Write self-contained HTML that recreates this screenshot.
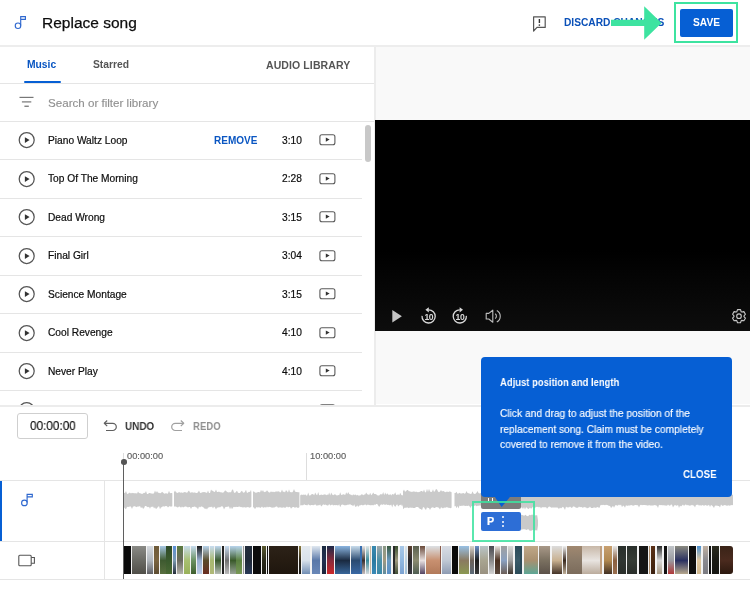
<!DOCTYPE html>
<html><head><meta charset="utf-8">
<style>
*{box-sizing:border-box;margin:0;padding:0}
html,body{width:750px;height:594px;overflow:hidden;background:#fff;font-family:"Liberation Sans",sans-serif;color:#0d0d0d}
.a{position:absolute;white-space:nowrap;will-change:transform}
.hl{position:absolute;height:1px;background:#e5e5e5}
.vl{position:absolute;width:1px;background:#e5e5e5}
</style></head><body>
<!-- header -->
<svg class="a" style="left:12px;top:14px" width="18" height="18" viewBox="0 0 18 18">
  <circle cx="6" cy="11.7" r="2.75" fill="none" stroke="#2f68cf" stroke-width="1.15"/>
  <path d="M8.7 11.4V2.6H13.4V5.4H8.7" fill="none" stroke="#2f68cf" stroke-width="1.15"/>
</svg>
<div class="a" style="left:42px;top:12.5px;font-size:15.5px;line-height:20px;color:#0d0d0d;-webkit-text-stroke:0.25px #0d0d0d">Replace song</div>

<svg class="a" style="left:531px;top:14px" width="16" height="18" viewBox="0 0 16 18">
  <path d="M2.6 2.8H14.2V13.4H6L2.6 17Z" fill="none" stroke="#555" stroke-width="1.2" stroke-linejoin="round"/>
  <rect x="7.7" y="5" width="1.4" height="4" fill="#333"/>
  <rect x="7.7" y="10.4" width="1.4" height="1.4" fill="#333"/>
</svg>
<div class="a" style="left:564px;top:16px;font-size:10.2px;font-weight:700;line-height:14px;color:#0a50b8">DISCARD CHANGES</div>

<div class="a" style="left:680px;top:9px;width:53px;height:28px;background:#065fd4;border-radius:2px"></div>
<div class="a" style="left:680px;top:16px;width:53px;text-align:center;font-size:10.2px;font-weight:700;line-height:14px;color:#fff">SAVE</div>
<div class="a" style="left:674px;top:2px;width:64px;height:41px;border:2px solid #3de3a0"></div>
<svg class="a" style="left:600px;top:0" width="70" height="45" viewBox="0 0 70 45">
  <path d="M11 19.8H44.2V6.3L61.5 23L44.2 39.7V26.1H11Z" fill="#3de3a0"/>
</svg>

<div class="hl" style="left:0;top:45px;width:750px;height:2px;background:#ededed"></div>

<!-- right panel background -->
<div class="a" style="left:376px;top:47px;width:374px;height:357px;background:#f9f9f9"></div>
<div class="vl" style="left:374px;top:47px;height:358px;width:2px;background:#ececec"></div>

<!-- tabs -->
<div class="a" style="left:27px;top:58px;font-size:10.3px;font-weight:700;line-height:13px;color:#0a56c2">Music</div>
<div class="a" style="left:24px;top:81px;width:37px;height:2px;background:#065fd4;border-radius:1px"></div>
<div class="a" style="left:93px;top:58px;font-size:10.3px;font-weight:700;line-height:13px;color:#555">Starred</div>
<div class="a" style="left:265.5px;top:59px;font-size:10.5px;font-weight:700;line-height:13px;color:#555;letter-spacing:0.1px">AUDIO LIBRARY</div>
<div class="hl" style="left:0;top:83px;width:374px"></div>

<!-- search -->
<svg class="a" style="left:18px;top:94px" width="18" height="16" viewBox="0 0 18 16">
  <rect x="1.5" y="2.8" width="14" height="1.2" fill="#777"/>
  <rect x="3.9" y="7.3" width="9.4" height="1.2" fill="#777"/>
  <rect x="6.4" y="11.6" width="4.4" height="1.3" fill="#777"/>
</svg>
<div class="a" style="left:48px;top:95px;font-size:11.6px;line-height:15px;color:#909090;-webkit-text-stroke:0.15px #909090">Search or filter library</div>
<div class="hl" style="left:0;top:121px;width:374px"></div>

<!-- list -->
<div id="list" class="a" style="left:0;top:0;width:374px;height:405px;overflow:hidden">
<svg class="a" style="left:17px;top:130.3px" width="20" height="20" viewBox="0 0 20 20"><circle cx="9.7" cy="10" r="7.5" fill="none" stroke="#555" stroke-width="1.25"/><path d="M7.9 7.2V12.9L12.6 10.05Z" fill="#333"/></svg>
<div class="a" style="left:48px;top:133.8px;font-size:10.2px;line-height:14px;color:#0d0d0d;-webkit-text-stroke:0.2px #0d0d0d">Piano Waltz Loop</div>
<div class="a" style="left:282px;top:133.8px;font-size:10.2px;line-height:14px;color:#0d0d0d;-webkit-text-stroke:0.2px #0d0d0d">3:10</div>
<div class="a" style="left:213.7px;top:133.8px;font-size:10px;font-weight:700;line-height:14px;color:#0a56c2">REMOVE</div>
<svg class="a" style="left:317px;top:132.3px" width="20" height="16" viewBox="0 0 20 16"><rect x="2.9" y="2.7" width="15" height="10" rx="2" fill="none" stroke="#5a5a5a" stroke-width="1.1"/><path d="M8.8 5.4V9.7L12.6 7.55Z" fill="#333"/></svg>
<div class="hl" style="left:0;top:159.4px;width:362px"></div>
<svg class="a" style="left:17px;top:168.8px" width="20" height="20" viewBox="0 0 20 20"><circle cx="9.7" cy="10" r="7.5" fill="none" stroke="#555" stroke-width="1.25"/><path d="M7.9 7.2V12.9L12.6 10.05Z" fill="#333"/></svg>
<div class="a" style="left:48px;top:172.2px;font-size:10.2px;line-height:14px;color:#0d0d0d;-webkit-text-stroke:0.2px #0d0d0d">Top Of The Morning</div>
<div class="a" style="left:282px;top:172.2px;font-size:10.2px;line-height:14px;color:#0d0d0d;-webkit-text-stroke:0.2px #0d0d0d">2:28</div>
<svg class="a" style="left:317px;top:170.8px" width="20" height="16" viewBox="0 0 20 16"><rect x="2.9" y="2.7" width="15" height="10" rx="2" fill="none" stroke="#5a5a5a" stroke-width="1.1"/><path d="M8.8 5.4V9.7L12.6 7.55Z" fill="#333"/></svg>
<div class="hl" style="left:0;top:197.9px;width:362px"></div>
<svg class="a" style="left:17px;top:207.2px" width="20" height="20" viewBox="0 0 20 20"><circle cx="9.7" cy="10" r="7.5" fill="none" stroke="#555" stroke-width="1.25"/><path d="M7.9 7.2V12.9L12.6 10.05Z" fill="#333"/></svg>
<div class="a" style="left:48px;top:210.7px;font-size:10.2px;line-height:14px;color:#0d0d0d;-webkit-text-stroke:0.2px #0d0d0d">Dead Wrong</div>
<div class="a" style="left:282px;top:210.7px;font-size:10.2px;line-height:14px;color:#0d0d0d;-webkit-text-stroke:0.2px #0d0d0d">3:15</div>
<svg class="a" style="left:317px;top:209.2px" width="20" height="16" viewBox="0 0 20 16"><rect x="2.9" y="2.7" width="15" height="10" rx="2" fill="none" stroke="#5a5a5a" stroke-width="1.1"/><path d="M8.8 5.4V9.7L12.6 7.55Z" fill="#333"/></svg>
<div class="hl" style="left:0;top:236.4px;width:362px"></div>
<svg class="a" style="left:17px;top:245.7px" width="20" height="20" viewBox="0 0 20 20"><circle cx="9.7" cy="10" r="7.5" fill="none" stroke="#555" stroke-width="1.25"/><path d="M7.9 7.2V12.9L12.6 10.05Z" fill="#333"/></svg>
<div class="a" style="left:48px;top:249.2px;font-size:10.2px;line-height:14px;color:#0d0d0d;-webkit-text-stroke:0.2px #0d0d0d">Final Girl</div>
<div class="a" style="left:282px;top:249.2px;font-size:10.2px;line-height:14px;color:#0d0d0d;-webkit-text-stroke:0.2px #0d0d0d">3:04</div>
<svg class="a" style="left:317px;top:247.7px" width="20" height="16" viewBox="0 0 20 16"><rect x="2.9" y="2.7" width="15" height="10" rx="2" fill="none" stroke="#5a5a5a" stroke-width="1.1"/><path d="M8.8 5.4V9.7L12.6 7.55Z" fill="#333"/></svg>
<div class="hl" style="left:0;top:274.8px;width:362px"></div>
<svg class="a" style="left:17px;top:284.1px" width="20" height="20" viewBox="0 0 20 20"><circle cx="9.7" cy="10" r="7.5" fill="none" stroke="#555" stroke-width="1.25"/><path d="M7.9 7.2V12.9L12.6 10.05Z" fill="#333"/></svg>
<div class="a" style="left:48px;top:287.6px;font-size:10.2px;line-height:14px;color:#0d0d0d;-webkit-text-stroke:0.2px #0d0d0d">Science Montage</div>
<div class="a" style="left:282px;top:287.6px;font-size:10.2px;line-height:14px;color:#0d0d0d;-webkit-text-stroke:0.2px #0d0d0d">3:15</div>
<svg class="a" style="left:317px;top:286.1px" width="20" height="16" viewBox="0 0 20 16"><rect x="2.9" y="2.7" width="15" height="10" rx="2" fill="none" stroke="#5a5a5a" stroke-width="1.1"/><path d="M8.8 5.4V9.7L12.6 7.55Z" fill="#333"/></svg>
<div class="hl" style="left:0;top:313.2px;width:362px"></div>
<svg class="a" style="left:17px;top:322.6px" width="20" height="20" viewBox="0 0 20 20"><circle cx="9.7" cy="10" r="7.5" fill="none" stroke="#555" stroke-width="1.25"/><path d="M7.9 7.2V12.9L12.6 10.05Z" fill="#333"/></svg>
<div class="a" style="left:48px;top:326.1px;font-size:10.2px;line-height:14px;color:#0d0d0d;-webkit-text-stroke:0.2px #0d0d0d">Cool Revenge</div>
<div class="a" style="left:282px;top:326.1px;font-size:10.2px;line-height:14px;color:#0d0d0d;-webkit-text-stroke:0.2px #0d0d0d">4:10</div>
<svg class="a" style="left:317px;top:324.6px" width="20" height="16" viewBox="0 0 20 16"><rect x="2.9" y="2.7" width="15" height="10" rx="2" fill="none" stroke="#5a5a5a" stroke-width="1.1"/><path d="M8.8 5.4V9.7L12.6 7.55Z" fill="#333"/></svg>
<div class="hl" style="left:0;top:351.7px;width:362px"></div>
<svg class="a" style="left:17px;top:361.0px" width="20" height="20" viewBox="0 0 20 20"><circle cx="9.7" cy="10" r="7.5" fill="none" stroke="#555" stroke-width="1.25"/><path d="M7.9 7.2V12.9L12.6 10.05Z" fill="#333"/></svg>
<div class="a" style="left:48px;top:364.5px;font-size:10.2px;line-height:14px;color:#0d0d0d;-webkit-text-stroke:0.2px #0d0d0d">Never Play</div>
<div class="a" style="left:282px;top:364.5px;font-size:10.2px;line-height:14px;color:#0d0d0d;-webkit-text-stroke:0.2px #0d0d0d">4:10</div>
<svg class="a" style="left:317px;top:363.0px" width="20" height="16" viewBox="0 0 20 16"><rect x="2.9" y="2.7" width="15" height="10" rx="2" fill="none" stroke="#5a5a5a" stroke-width="1.1"/><path d="M8.8 5.4V9.7L12.6 7.55Z" fill="#333"/></svg>
<div class="hl" style="left:0;top:390.2px;width:362px"></div>
<svg class="a" style="left:17px;top:399.5px" width="20" height="20" viewBox="0 0 20 20"><circle cx="9.7" cy="10" r="7.5" fill="none" stroke="#555" stroke-width="1.25"/><path d="M7.9 7.2V12.9L12.6 10.05Z" fill="#333"/></svg>
<svg class="a" style="left:317px;top:401.5px" width="20" height="16" viewBox="0 0 20 16"><rect x="2.9" y="2.7" width="15" height="10" rx="2" fill="none" stroke="#5a5a5a" stroke-width="1.1"/><path d="M8.8 5.4V9.7L12.6 7.55Z" fill="#333"/></svg>
</div>

<div class="a" style="left:365px;top:125px;width:6px;height:37px;background:#c8c8c8;border-radius:3px"></div>

<!-- video -->
<div class="a" style="left:375px;top:120px;width:375px;height:211px;background:#000"></div>


<div class="a" style="left:375px;top:250px;width:375px;height:81px;background:linear-gradient(#000,#0d0d0d)"></div>
<!-- video controls -->
<svg class="a" style="left:385px;top:300px" width="125" height="30" viewBox="0 0 125 30">
  <path d="M7.3 10V22.4L16.9 16.2Z" fill="#c4c4c4"/>
  <g fill="none" stroke="#d8d8d8" stroke-width="1.3">
    <path d="M43.60 9.80A6.6 6.6 0 1 1 37.03 15.82"/>
    <path d="M74.80 9.80A6.6 6.6 0 1 0 81.37 15.82"/>
  </g>
  <path d="M40.4 9.8L43.8 7.2V12.4Z" fill="#d8d8d8"/>
  <path d="M78 9.8L74.6 7.2V12.4Z" fill="#d8d8d8"/>
  <text x="43.8" y="19.7" font-family="Liberation Sans" font-weight="700" font-size="8.6" fill="#d8d8d8" text-anchor="middle" letter-spacing="-0.4">10</text>
  <text x="75" y="19.7" font-family="Liberation Sans" font-weight="700" font-size="8.6" fill="#d8d8d8" text-anchor="middle" letter-spacing="-0.4">10</text>
  <g fill="none" stroke="#bdbdbd" stroke-width="1.1" stroke-linejoin="round">
    <path d="M101.2 13.4H103.8L107.8 10.2V22.2L103.8 19H101.2Z"/>
    <path d="M110.2 13.8A3 3 0 0 1 110.2 18.6"/>
    <path d="M111.8 10.4A6.6 6.6 0 0 1 111.8 22"/>
  </g>
</svg>
<svg class="a" style="left:730px;top:307px" width="18" height="18" viewBox="0 0 18 18">
  <path d="M6.81 4.71 L7.49 2.67 L10.51 2.67 L11.19 4.71 L11.80 5.05 L13.90 4.63 L15.41 7.24 L13.99 8.85 L13.99 9.55 L15.41 11.16 L13.90 13.77 L11.80 13.35 L11.19 13.69 L10.51 15.73 L7.49 15.73 L6.81 13.69 L6.20 13.35 L4.10 13.77 L2.59 11.16 L4.01 9.55 L4.01 8.85 L2.59 7.24 L4.10 4.63 L6.20 5.05Z" fill="none" stroke="#c8c8c8" stroke-width="1.1" stroke-linejoin="round"/>
  <circle cx="9" cy="9.2" r="2.3" fill="none" stroke="#c8c8c8" stroke-width="1.1"/>
</svg>

<div class="hl" style="left:0;top:405px;width:750px;height:2px;background:#ececec"></div>

<!-- timeline toolbar -->
<div class="a" style="left:17px;top:413px;width:71px;height:26px;border:1px solid #cfcfcf;border-radius:3px"></div>
<div class="a" style="left:29.5px;top:418.4px;font-size:13px;line-height:15px;color:#0d0d0d;transform:scaleX(0.905);transform-origin:0 0;-webkit-text-stroke:0.15px #0d0d0d">00:00:00</div>
<svg class="a" style="left:100px;top:416px" width="90" height="20" viewBox="0 0 90 20">
  <g fill="none" stroke="#606060" stroke-width="1.2" stroke-linejoin="round">
    <path d="M4.6 7.3H12.7A3.6 3.6 0 0 1 12.7 14.5H6"/>
    <path d="M7.2 4.5L4.3 7.3L7.2 10.1"/>
  </g>
  <g fill="none" stroke="#a0a0a0" stroke-width="1.2" stroke-linejoin="round">
    <path d="M83.4 7.3H75.3A3.6 3.6 0 0 0 75.3 14.5H82"/>
    <path d="M80.8 4.5L83.7 7.3L80.8 10.1"/>
  </g>
</svg>
<div class="a" style="left:125px;top:419px;font-size:11px;font-weight:700;line-height:14px;color:#333;transform:scaleX(0.9);transform-origin:0 0">UNDO</div>
<div class="a" style="left:193px;top:419px;font-size:11px;font-weight:700;line-height:14px;color:#909090;transform:scaleX(0.87);transform-origin:0 0">REDO</div>

<!-- ruler -->
<div class="a" style="left:127px;top:451px;font-size:9.3px;line-height:11px;color:#606060;-webkit-text-stroke:0.15px #606060">00:00:00</div>
<div class="a" style="left:310px;top:451px;font-size:9.3px;line-height:11px;color:#606060;-webkit-text-stroke:0.15px #606060">10:00:00</div>
<div class="vl" style="left:306px;top:453px;height:28px;background:#ddd"></div>

<!-- tracks -->
<div class="hl" style="left:0;top:480px;width:750px"></div>
<div class="hl" style="left:0;top:541px;width:750px"></div>
<div class="hl" style="left:0;top:579px;width:750px"></div>
<div class="vl" style="left:104px;top:481px;height:98px"></div>
<div class="a" style="left:0;top:481px;width:2px;height:60px;background:#065fd4"></div>
<svg class="a" style="left:16px;top:490px" width="20" height="20" viewBox="0 0 20 20">
  <circle cx="8.4" cy="12.9" r="2.8" fill="none" stroke="#2f68cf" stroke-width="1.15"/>
  <path d="M11.1 12.4V4.3H16.3V6.9H11.1" fill="none" stroke="#2f68cf" stroke-width="1.15"/>
</svg>
<svg class="a" style="left:15px;top:551px" width="24" height="18" viewBox="0 0 24 18">
  <rect x="3.8" y="4.2" width="12.4" height="10.6" rx="1" fill="none" stroke="#555" stroke-width="1.1"/>
  <path d="M16.2 6.5H19.4V12.3H16.2" fill="none" stroke="#555" stroke-width="1.1"/>
</svg>
<svg class="a" style="left:0;top:0" width="750" height="594" viewBox="0 0 750 594"><path fill="#cacaca" d="M124.0 492.8 L125.0 493.1 L126.0 491.1 L127.0 493.8 L128.0 494.0 L129.0 492.7 L130.0 492.8 L131.0 493.5 L132.0 492.7 L133.0 493.2 L134.0 493.0 L135.0 493.5 L136.0 493.0 L137.0 493.7 L138.0 491.4 L139.0 493.1 L140.0 493.3 L141.0 493.6 L142.0 494.1 L143.0 493.6 L144.0 492.8 L145.0 493.0 L146.0 491.1 L147.0 493.9 L148.0 493.9 L149.0 492.9 L150.0 493.0 L151.0 493.4 L152.0 493.5 L153.0 493.8 L154.0 493.2 L155.0 490.5 L156.0 492.7 L157.0 490.9 L158.0 492.8 L159.0 492.8 L160.0 493.3 L161.0 493.0 L162.0 491.8 L163.0 492.6 L164.0 493.6 L165.0 493.8 L166.0 492.9 L167.0 493.8 L168.0 493.4 L169.0 490.8 L170.0 493.3 L171.0 493.1 L172.0 492.9 L172.3 493.6 L172.3 506.4 L172.0 506.0 L171.0 507.1 L170.0 505.9 L169.0 506.4 L168.0 507.4 L167.0 506.3 L166.0 505.9 L165.0 506.2 L164.0 506.8 L163.0 505.9 L162.0 507.2 L161.0 507.2 L160.0 509.2 L159.0 505.9 L158.0 506.9 L157.0 508.1 L156.0 509.2 L155.0 507.2 L154.0 508.4 L153.0 506.2 L152.0 507.3 L151.0 506.4 L150.0 508.8 L149.0 506.7 L148.0 507.2 L147.0 506.8 L146.0 506.1 L145.0 506.1 L144.0 508.2 L143.0 508.7 L142.0 507.0 L141.0 508.3 L140.0 506.0 L139.0 506.5 L138.0 506.5 L137.0 506.7 L136.0 507.2 L135.0 506.1 L134.0 506.4 L133.0 506.5 L132.0 509.1 L131.0 506.8 L130.0 506.2 L129.0 507.0 L128.0 506.8 L127.0 507.1 L126.0 509.3 L125.0 508.6 L124.0 507.3Z M174.0 492.3 L175.0 490.4 L176.0 492.3 L177.0 492.8 L178.0 493.0 L179.0 491.8 L180.0 492.8 L181.0 492.4 L182.0 492.6 L183.0 492.9 L184.0 492.0 L185.0 492.2 L186.0 492.3 L187.0 493.0 L188.0 491.6 L189.0 490.6 L190.0 492.4 L191.0 492.8 L192.0 492.0 L193.0 492.7 L194.0 492.4 L195.0 492.4 L196.0 492.9 L197.0 493.0 L198.0 492.3 L199.0 490.4 L200.0 492.7 L201.0 493.1 L202.0 492.3 L203.0 492.2 L204.0 492.1 L205.0 492.3 L206.0 492.4 L207.0 493.1 L208.0 490.6 L209.0 493.0 L210.0 493.0 L211.0 489.5 L212.0 490.8 L213.0 490.7 L214.0 492.1 L215.0 491.8 L216.0 489.6 L217.0 492.1 L218.0 491.9 L219.0 491.6 L220.0 492.3 L221.0 492.2 L222.0 492.4 L223.0 492.8 L224.0 492.1 L225.0 490.5 L226.0 490.7 L227.0 492.0 L228.0 492.3 L229.0 492.4 L230.0 492.1 L231.0 492.4 L232.0 489.8 L233.0 489.4 L234.0 492.4 L235.0 492.9 L236.0 491.8 L237.0 490.7 L238.0 492.8 L239.0 492.9 L240.0 492.9 L241.0 491.6 L242.0 490.7 L243.0 492.6 L244.0 492.7 L245.0 491.7 L246.0 489.8 L247.0 493.1 L248.0 492.6 L249.0 491.7 L250.0 492.1 L251.0 489.8 L251.4 492.6 L251.4 506.8 L251.0 506.8 L250.0 507.8 L249.0 507.4 L248.0 506.9 L247.0 507.2 L246.0 507.5 L245.0 507.4 L244.0 507.0 L243.0 507.8 L242.0 506.9 L241.0 507.3 L240.0 506.8 L239.0 506.6 L238.0 507.0 L237.0 506.9 L236.0 506.8 L235.0 507.3 L234.0 506.8 L233.0 507.5 L232.0 509.2 L231.0 507.0 L230.0 509.2 L229.0 506.4 L228.0 506.4 L227.0 507.1 L226.0 506.8 L225.0 507.6 L224.0 509.6 L223.0 506.8 L222.0 506.3 L221.0 506.5 L220.0 507.6 L219.0 507.0 L218.0 507.8 L217.0 507.4 L216.0 509.5 L215.0 507.4 L214.0 506.4 L213.0 508.5 L212.0 506.6 L211.0 507.2 L210.0 506.7 L209.0 507.4 L208.0 507.6 L207.0 509.4 L206.0 508.3 L205.0 509.3 L204.0 507.8 L203.0 507.3 L202.0 506.6 L201.0 506.4 L200.0 507.6 L199.0 506.5 L198.0 509.4 L197.0 507.6 L196.0 507.4 L195.0 506.4 L194.0 506.8 L193.0 507.1 L192.0 507.0 L191.0 509.0 L190.0 507.0 L189.0 507.1 L188.0 507.5 L187.0 507.0 L186.0 506.4 L185.0 506.4 L184.0 506.9 L183.0 507.5 L182.0 506.4 L181.0 507.8 L180.0 506.8 L179.0 506.6 L178.0 507.5 L177.0 507.2 L176.0 506.6 L175.0 506.6 L174.0 506.6Z M253.0 491.6 L254.0 491.4 L255.0 492.6 L256.0 492.7 L257.0 492.6 L258.0 492.0 L259.0 492.0 L260.0 492.5 L261.0 489.7 L262.0 491.7 L263.0 490.1 L264.0 492.3 L265.0 491.8 L266.0 491.8 L267.0 490.3 L268.0 491.6 L269.0 492.6 L270.0 492.6 L271.0 491.3 L272.0 492.2 L273.0 491.4 L274.0 492.3 L275.0 491.7 L276.0 491.4 L277.0 491.5 L278.0 491.4 L279.0 491.3 L280.0 492.5 L281.0 492.0 L282.0 489.4 L283.0 492.1 L284.0 491.6 L285.0 492.5 L286.0 490.1 L287.0 491.2 L288.0 492.5 L289.0 489.2 L290.0 492.3 L291.0 492.0 L292.0 492.6 L293.0 491.6 L294.0 489.1 L295.0 491.5 L296.0 491.9 L297.0 491.9 L298.0 492.3 L299.0 492.2 L299.4 492.2 L299.4 506.9 L299.0 507.5 L298.0 507.9 L297.0 507.5 L296.0 506.9 L295.0 507.9 L294.0 507.0 L293.0 506.9 L292.0 507.4 L291.0 508.7 L290.0 506.8 L289.0 506.9 L288.0 507.5 L287.0 506.5 L286.0 507.2 L285.0 507.9 L284.0 507.2 L283.0 507.6 L282.0 507.7 L281.0 507.4 L280.0 507.3 L279.0 507.5 L278.0 507.8 L277.0 506.4 L276.0 506.5 L275.0 507.3 L274.0 507.5 L273.0 507.4 L272.0 507.8 L271.0 507.2 L270.0 507.1 L269.0 506.7 L268.0 507.6 L267.0 506.5 L266.0 507.8 L265.0 507.0 L264.0 507.5 L263.0 507.7 L262.0 506.6 L261.0 507.4 L260.0 507.9 L259.0 506.8 L258.0 507.7 L257.0 507.0 L256.0 507.5 L255.0 509.2 L254.0 507.6 L253.0 507.2Z M300.2 495.4 L301.2 494.6 L302.2 495.1 L303.2 494.5 L304.2 495.1 L305.2 494.3 L306.2 495.4 L307.2 495.5 L308.2 492.4 L309.2 495.5 L310.2 495.4 L311.2 494.6 L312.2 494.0 L313.2 494.2 L314.2 495.2 L315.2 492.5 L316.2 494.5 L317.2 495.2 L318.2 491.9 L319.2 495.3 L320.2 494.9 L321.2 494.4 L322.2 495.0 L323.2 494.7 L324.2 494.4 L325.2 494.3 L326.2 495.2 L327.2 494.5 L328.2 495.1 L329.2 492.6 L330.2 495.5 L331.2 492.5 L332.2 494.6 L333.2 495.3 L334.2 494.4 L335.2 494.3 L336.2 495.3 L337.2 495.5 L338.2 495.0 L339.2 495.2 L340.2 492.2 L341.2 494.9 L342.2 494.7 L343.2 494.2 L344.2 494.6 L345.2 494.9 L346.2 492.3 L347.2 494.3 L348.2 492.0 L349.2 494.1 L350.2 494.4 L351.2 494.8 L352.2 495.5 L353.2 494.3 L354.2 495.2 L355.2 494.2 L356.2 495.4 L357.2 494.8 L358.2 495.4 L359.2 495.5 L360.2 495.5 L361.2 494.6 L362.2 494.2 L363.2 495.3 L364.2 494.6 L365.2 494.4 L366.2 492.6 L367.2 494.2 L368.2 494.5 L369.2 495.0 L370.2 492.7 L371.2 495.2 L372.2 494.2 L373.2 492.5 L374.2 494.1 L375.2 494.1 L376.2 494.2 L377.2 495.2 L378.2 495.4 L379.2 495.4 L380.2 494.2 L381.2 494.2 L382.2 494.4 L383.2 492.1 L384.2 495.3 L385.2 492.6 L386.2 494.8 L387.2 493.3 L388.2 494.4 L389.2 495.1 L390.2 494.1 L391.2 495.5 L392.2 494.0 L393.2 494.6 L394.2 494.3 L395.2 492.3 L396.2 494.9 L397.2 494.7 L398.2 494.2 L399.2 495.2 L400.2 492.8 L401.2 494.7 L402.2 495.4 L403.0 495.0 L403.0 504.6 L402.2 506.8 L401.2 504.5 L400.2 505.1 L399.2 505.2 L398.2 506.6 L397.2 504.2 L396.2 505.3 L395.2 507.1 L394.2 505.6 L393.2 504.3 L392.2 507.4 L391.2 504.6 L390.2 505.2 L389.2 505.3 L388.2 504.7 L387.2 505.0 L386.2 504.3 L385.2 505.1 L384.2 504.4 L383.2 504.2 L382.2 505.1 L381.2 504.2 L380.2 505.2 L379.2 507.1 L378.2 505.4 L377.2 504.1 L376.2 504.1 L375.2 505.0 L374.2 504.4 L373.2 505.5 L372.2 505.0 L371.2 505.3 L370.2 505.2 L369.2 504.9 L368.2 504.7 L367.2 504.8 L366.2 505.5 L365.2 504.3 L364.2 505.0 L363.2 505.3 L362.2 505.3 L361.2 504.7 L360.2 505.5 L359.2 505.4 L358.2 506.9 L357.2 505.2 L356.2 506.7 L355.2 506.8 L354.2 504.3 L353.2 506.2 L352.2 505.3 L351.2 505.0 L350.2 504.2 L349.2 504.6 L348.2 504.8 L347.2 504.8 L346.2 505.3 L345.2 505.3 L344.2 505.3 L343.2 504.7 L342.2 504.4 L341.2 505.0 L340.2 507.3 L339.2 504.2 L338.2 505.4 L337.2 505.3 L336.2 505.1 L335.2 505.2 L334.2 505.0 L333.2 505.4 L332.2 504.6 L331.2 504.9 L330.2 505.5 L329.2 504.1 L328.2 505.5 L327.2 505.5 L326.2 505.1 L325.2 504.5 L324.2 504.9 L323.2 504.2 L322.2 505.6 L321.2 506.5 L320.2 504.5 L319.2 505.2 L318.2 505.2 L317.2 505.5 L316.2 505.6 L315.2 504.2 L314.2 505.0 L313.2 505.3 L312.2 505.1 L311.2 505.1 L310.2 505.6 L309.2 505.1 L308.2 504.3 L307.2 505.5 L306.2 505.0 L305.2 505.0 L304.2 504.2 L303.2 505.3 L302.2 505.3 L301.2 505.3 L300.2 505.5Z M403.0 491.3 L404.0 489.5 L405.0 491.8 L406.0 491.2 L407.0 490.0 L408.0 490.0 L409.0 491.6 L410.0 491.0 L411.0 492.2 L412.0 491.6 L413.0 491.9 L414.0 490.9 L415.0 492.3 L416.0 491.4 L417.0 491.9 L418.0 492.2 L419.0 492.0 L420.0 491.8 L421.0 490.9 L422.0 491.1 L423.0 491.9 L424.0 489.6 L425.0 492.2 L426.0 492.3 L427.0 488.8 L428.0 492.1 L429.0 488.8 L430.0 491.5 L431.0 492.0 L432.0 491.7 L433.0 489.3 L434.0 492.0 L435.0 491.0 L436.0 489.0 L437.0 489.4 L438.0 491.6 L439.0 492.3 L440.0 491.6 L441.0 489.9 L442.0 491.4 L443.0 491.0 L444.0 491.3 L445.0 492.2 L446.0 492.0 L447.0 491.4 L448.0 492.0 L449.0 491.8 L450.0 491.3 L451.0 492.2 L451.6 491.9 L451.6 507.4 L451.0 508.2 L450.0 507.9 L449.0 507.7 L448.0 507.7 L447.0 507.1 L446.0 507.4 L445.0 507.7 L444.0 507.6 L443.0 508.4 L442.0 507.8 L441.0 507.2 L440.0 509.4 L439.0 508.1 L438.0 507.2 L437.0 507.2 L436.0 506.9 L435.0 508.1 L434.0 508.1 L433.0 507.2 L432.0 507.5 L431.0 507.9 L430.0 510.0 L429.0 508.1 L428.0 508.0 L427.0 507.2 L426.0 510.1 L425.0 509.1 L424.0 507.2 L423.0 507.3 L422.0 510.3 L421.0 509.0 L420.0 509.0 L419.0 507.9 L418.0 507.1 L417.0 506.9 L416.0 507.0 L415.0 507.9 L414.0 508.0 L413.0 508.1 L412.0 507.6 L411.0 508.0 L410.0 507.3 L409.0 508.2 L408.0 507.7 L407.0 507.3 L406.0 507.9 L405.0 507.4 L404.0 508.2 L403.0 509.2Z M454.5 493.1 L455.5 492.9 L456.5 491.8 L457.5 493.8 L458.5 493.6 L459.5 492.7 L460.5 493.4 L461.5 493.5 L462.5 493.2 L463.5 492.9 L464.5 493.7 L465.5 493.3 L466.5 491.0 L467.5 493.0 L468.5 493.2 L469.5 493.6 L470.5 494.1 L471.5 493.8 L472.5 491.3 L473.5 493.6 L474.5 494.0 L475.5 493.7 L476.5 492.7 L477.5 491.0 L478.5 493.0 L479.5 493.4 L480.5 492.9 L481.5 493.6 L482.5 494.0 L483.5 493.8 L484.5 492.8 L485.5 493.0 L486.5 492.9 L487.5 493.0 L488.5 493.6 L489.5 493.9 L490.5 493.8 L491.5 492.6 L492.5 493.0 L493.5 493.8 L494.5 493.8 L495.5 493.8 L496.5 493.9 L497.5 493.7 L498.5 493.0 L499.5 492.7 L500.5 493.3 L501.5 491.7 L502.5 493.9 L503.5 492.7 L504.5 491.3 L505.5 494.1 L506.5 492.7 L507.5 493.9 L508.5 493.8 L509.5 493.4 L510.5 493.2 L511.5 494.1 L512.5 493.1 L513.5 493.8 L514.5 493.4 L515.5 490.7 L516.5 493.8 L517.5 493.5 L518.5 492.9 L519.5 492.8 L520.0 493.6 L520.0 505.8 L519.5 506.7 L518.5 506.1 L517.5 505.9 L516.5 505.9 L515.5 505.9 L514.5 508.3 L513.5 507.7 L512.5 505.9 L511.5 505.6 L510.5 506.4 L509.5 506.4 L508.5 506.1 L507.5 506.1 L506.5 505.9 L505.5 506.1 L504.5 505.4 L503.5 505.8 L502.5 506.2 L501.5 506.0 L500.5 505.5 L499.5 506.6 L498.5 506.6 L497.5 505.5 L496.5 505.8 L495.5 505.5 L494.5 505.5 L493.5 506.6 L492.5 508.6 L491.5 507.4 L490.5 505.6 L489.5 507.6 L488.5 506.3 L487.5 506.1 L486.5 507.7 L485.5 506.4 L484.5 506.3 L483.5 506.4 L482.5 505.8 L481.5 506.0 L480.5 505.6 L479.5 505.6 L478.5 505.7 L477.5 505.8 L476.5 506.2 L475.5 505.3 L474.5 505.8 L473.5 506.0 L472.5 505.7 L471.5 506.0 L470.5 508.0 L469.5 506.2 L468.5 505.4 L467.5 506.1 L466.5 505.7 L465.5 505.9 L464.5 505.8 L463.5 505.5 L462.5 505.7 L461.5 505.7 L460.5 506.1 L459.5 505.6 L458.5 508.5 L457.5 506.1 L456.5 508.2 L455.5 505.7 L454.5 506.6Z M520.0 494.4 L521.0 494.2 L522.0 493.6 L523.0 494.4 L524.0 491.0 L525.0 493.7 L526.0 494.4 L527.0 493.2 L528.0 493.0 L529.0 494.4 L530.0 493.0 L531.0 493.3 L532.0 494.3 L533.0 494.1 L534.0 494.4 L535.0 491.8 L536.0 494.1 L537.0 493.1 L538.0 494.0 L539.0 494.0 L540.0 494.2 L541.0 493.4 L542.0 494.2 L543.0 494.2 L544.0 494.3 L545.0 494.3 L546.0 491.2 L547.0 494.3 L548.0 494.3 L549.0 494.2 L550.0 493.1 L551.0 494.1 L552.0 494.0 L553.0 494.1 L554.0 492.0 L555.0 494.3 L556.0 493.9 L557.0 494.1 L558.0 493.8 L559.0 493.6 L560.0 493.2 L561.0 493.0 L562.0 493.7 L563.0 493.6 L564.0 494.4 L565.0 493.3 L566.0 494.3 L567.0 493.1 L568.0 492.2 L569.0 494.4 L570.0 493.2 L571.0 493.1 L572.0 494.4 L573.0 494.1 L574.0 491.0 L575.0 493.4 L576.0 491.3 L577.0 493.3 L578.0 493.0 L579.0 492.2 L580.0 494.3 L581.0 492.2 L582.0 493.5 L583.0 493.2 L584.0 493.8 L585.0 493.6 L586.0 493.5 L587.0 494.4 L588.0 492.1 L589.0 493.4 L590.0 494.5 L591.0 491.2 L592.0 493.4 L593.0 493.5 L594.0 493.8 L595.0 493.3 L596.0 494.2 L597.0 490.9 L598.0 493.3 L599.0 493.9 L600.0 494.0 L600.0 507.0 L599.0 507.9 L598.0 506.9 L597.0 507.3 L596.0 507.7 L595.0 507.8 L594.0 507.3 L593.0 508.0 L592.0 508.0 L591.0 507.9 L590.0 506.6 L589.0 507.7 L588.0 507.7 L587.0 508.5 L586.0 507.3 L585.0 507.6 L584.0 506.7 L583.0 507.9 L582.0 507.3 L581.0 507.1 L580.0 507.3 L579.0 506.6 L578.0 507.7 L577.0 507.8 L576.0 507.8 L575.0 506.9 L574.0 506.6 L573.0 506.5 L572.0 507.9 L571.0 507.5 L570.0 506.5 L569.0 507.4 L568.0 507.2 L567.0 507.4 L566.0 506.6 L565.0 509.9 L564.0 507.9 L563.0 506.8 L562.0 507.6 L561.0 508.5 L560.0 507.5 L559.0 509.1 L558.0 507.9 L557.0 507.2 L556.0 507.7 L555.0 507.2 L554.0 507.7 L553.0 507.3 L552.0 507.7 L551.0 507.6 L550.0 506.8 L549.0 506.6 L548.0 507.6 L547.0 508.8 L546.0 507.1 L545.0 507.6 L544.0 507.0 L543.0 507.5 L542.0 507.1 L541.0 508.5 L540.0 506.8 L539.0 507.4 L538.0 506.8 L537.0 507.1 L536.0 506.7 L535.0 507.9 L534.0 508.0 L533.0 506.6 L532.0 507.9 L531.0 508.8 L530.0 507.6 L529.0 508.7 L528.0 509.0 L527.0 507.7 L526.0 507.3 L525.0 509.4 L524.0 507.1 L523.0 509.1 L522.0 507.4 L521.0 507.6 L520.0 507.4Z M600.0 494.6 L601.0 494.5 L602.0 494.0 L603.0 494.4 L604.0 494.2 L605.0 492.6 L606.0 495.1 L607.0 495.1 L608.0 493.1 L609.0 494.8 L610.0 494.3 L611.0 495.2 L612.0 494.3 L613.0 494.8 L614.0 495.1 L615.0 494.8 L616.0 494.2 L617.0 494.9 L618.0 495.4 L619.0 494.8 L620.0 494.5 L621.0 495.5 L622.0 495.3 L623.0 495.4 L624.0 494.5 L625.0 494.8 L626.0 495.2 L627.0 495.3 L628.0 494.4 L629.0 495.4 L630.0 494.7 L631.0 495.0 L632.0 494.8 L633.0 494.2 L634.0 494.6 L635.0 492.6 L636.0 495.0 L637.0 494.8 L638.0 494.4 L639.0 494.9 L640.0 494.4 L641.0 495.5 L642.0 494.1 L643.0 492.4 L644.0 492.1 L645.0 494.5 L646.0 495.3 L647.0 495.1 L648.0 495.1 L649.0 494.0 L650.0 495.4 L651.0 495.3 L652.0 494.7 L653.0 494.8 L654.0 495.3 L655.0 494.5 L656.0 494.1 L657.0 495.3 L658.0 495.4 L659.0 494.7 L660.0 495.5 L661.0 494.6 L662.0 495.4 L663.0 492.4 L664.0 495.3 L665.0 494.9 L666.0 495.2 L667.0 495.2 L668.0 495.0 L669.0 494.6 L670.0 494.8 L671.0 494.9 L672.0 494.1 L673.0 495.0 L674.0 494.9 L675.0 494.8 L676.0 495.5 L677.0 494.2 L678.0 492.1 L679.0 495.2 L680.0 494.5 L681.0 494.4 L682.0 494.5 L683.0 493.1 L684.0 494.9 L685.0 495.3 L686.0 494.5 L687.0 495.4 L688.0 494.3 L689.0 495.2 L690.0 494.3 L691.0 494.2 L692.0 494.1 L693.0 494.4 L694.0 494.1 L695.0 495.1 L696.0 494.2 L697.0 494.2 L698.0 495.4 L699.0 494.3 L700.0 494.4 L701.0 494.4 L702.0 494.2 L703.0 495.2 L704.0 494.5 L705.0 495.3 L706.0 492.6 L707.0 494.1 L708.0 495.1 L709.0 495.2 L710.0 494.4 L711.0 494.5 L712.0 494.4 L713.0 494.3 L714.0 495.1 L715.0 494.3 L716.0 492.3 L717.0 494.9 L718.0 495.0 L719.0 495.2 L720.0 494.9 L721.0 493.0 L722.0 494.1 L723.0 495.2 L724.0 494.6 L725.0 495.2 L726.0 492.8 L727.0 494.2 L728.0 495.2 L729.0 495.0 L730.0 492.3 L731.0 494.2 L732.0 494.4 L733.0 495.0 L733.0 505.0 L732.0 505.3 L731.0 505.0 L730.0 505.7 L729.0 505.6 L728.0 505.2 L727.0 505.9 L726.0 505.2 L725.0 505.3 L724.0 505.0 L723.0 505.9 L722.0 505.4 L721.0 504.6 L720.0 507.6 L719.0 505.9 L718.0 506.0 L717.0 505.6 L716.0 505.7 L715.0 505.4 L714.0 507.9 L713.0 506.6 L712.0 505.5 L711.0 505.0 L710.0 507.0 L709.0 504.7 L708.0 505.4 L707.0 505.7 L706.0 505.2 L705.0 505.0 L704.0 505.9 L703.0 505.0 L702.0 505.2 L701.0 505.7 L700.0 505.1 L699.0 505.8 L698.0 504.6 L697.0 504.9 L696.0 504.7 L695.0 507.6 L694.0 505.5 L693.0 505.6 L692.0 504.8 L691.0 505.4 L690.0 505.6 L689.0 505.7 L688.0 504.7 L687.0 505.4 L686.0 504.6 L685.0 504.7 L684.0 505.9 L683.0 504.6 L682.0 505.4 L681.0 506.6 L680.0 505.5 L679.0 508.0 L678.0 504.8 L677.0 505.8 L676.0 505.4 L675.0 505.0 L674.0 505.7 L673.0 507.5 L672.0 504.8 L671.0 504.5 L670.0 505.7 L669.0 505.6 L668.0 504.5 L667.0 505.8 L666.0 505.5 L665.0 505.5 L664.0 505.3 L663.0 505.2 L662.0 505.2 L661.0 505.1 L660.0 505.2 L659.0 504.8 L658.0 507.9 L657.0 505.7 L656.0 505.5 L655.0 505.1 L654.0 505.3 L653.0 505.5 L652.0 505.6 L651.0 505.4 L650.0 505.4 L649.0 505.1 L648.0 505.8 L647.0 505.3 L646.0 505.2 L645.0 505.0 L644.0 504.9 L643.0 504.9 L642.0 505.3 L641.0 504.8 L640.0 505.3 L639.0 507.5 L638.0 505.2 L637.0 505.3 L636.0 504.9 L635.0 505.1 L634.0 505.6 L633.0 505.8 L632.0 505.3 L631.0 505.1 L630.0 505.6 L629.0 505.6 L628.0 505.6 L627.0 505.9 L626.0 505.1 L625.0 507.8 L624.0 505.9 L623.0 505.4 L622.0 507.2 L621.0 504.6 L620.0 505.5 L619.0 504.6 L618.0 505.4 L617.0 505.8 L616.0 504.7 L615.0 505.8 L614.0 507.8 L613.0 505.8 L612.0 507.1 L611.0 507.9 L610.0 505.8 L609.0 506.0 L608.0 505.3 L607.0 504.9 L606.0 504.7 L605.0 505.2 L604.0 505.1 L603.0 504.8 L602.0 505.3 L601.0 504.7 L600.0 505.9Z M519.0 516.7 L520.3 515.1 L521.6 514.8 L522.9 515.2 L524.2 515.8 L525.5 514.8 L526.8 515.9 L528.1 516.3 L529.4 514.7 L530.7 515.3 L532.0 514.6 L533.3 514.9 L534.6 515.5 L535.9 515.2 L537.2 515.3 L538.0 520.4 L538.0 525.2 L537.2 530.8 L535.9 530.0 L534.6 530.9 L533.3 529.4 L532.0 530.5 L530.7 530.7 L529.4 530.5 L528.1 529.1 L526.8 530.0 L525.5 529.5 L524.2 529.3 L522.9 529.2 L521.6 529.8 L520.3 529.0 L519.0 530.3Z"/></svg>
<!-- original clip (dark gray) -->
<div class="a" style="left:481px;top:490px;width:40px;height:19px;background:#7c7c7c;border-radius:2px"></div>
<div class="a" style="left:487.8px;top:498px;width:1.3px;height:2.7px;background:#fff"></div>
<div class="a" style="left:491.8px;top:498px;width:1.3px;height:2.7px;background:#fff"></div>
<!-- replacement clip -->
<div class="a" style="left:481px;top:512px;width:40px;height:19px;background:#2d6ed6;border-radius:2px"></div>
<div class="a" style="left:487px;top:515px;font-size:10.8px;font-weight:700;line-height:13px;color:#fff;-webkit-text-stroke:0.2px #fff">P</div>
<div class="a" style="left:501.5px;top:516px;width:2px;height:2px;background:#fff;border-radius:1px"></div>
<div class="a" style="left:501.5px;top:520.6px;width:2px;height:2px;background:#fff;border-radius:1px"></div>
<div class="a" style="left:501.5px;top:525.2px;width:2px;height:2px;background:#fff;border-radius:1px"></div>

<!-- filmstrip -->
<div id="film" class="a" style="left:124px;top:546.2px;width:609px;height:28.3px;border-radius:0 3px 3px 0;overflow:hidden;background:#f2f2f2">
<div style="position:absolute;left:0.0px;top:0;width:6.7px;height:29px;background:#0a0a0a"></div>
<div style="position:absolute;left:8.0px;top:0;width:13.6px;height:29px;background:linear-gradient(#8a8a86,#6a6a64,#4e4c46)"></div>
<div style="position:absolute;left:22.9px;top:0;width:6.1px;height:29px;background:linear-gradient(#d6dade,#b0b6bc,#5a5a5e)"></div>
<div style="position:absolute;left:30.0px;top:0;width:5.3px;height:29px;background:linear-gradient(#6e5a38,#7a6440,#5a4a30)"></div>
<div style="position:absolute;left:36.3px;top:0;width:5.4px;height:29px;background:linear-gradient(#a8c8e4,#3e5a30,#5a7040)"></div>
<div style="position:absolute;left:42.4px;top:0;width:5.9px;height:29px;background:linear-gradient(#2e4a26,#3a5a2e,#4a6a34)"></div>
<div style="position:absolute;left:48.8px;top:0;width:3.7px;height:29px;background:linear-gradient(#5a90d8,#7a9ab0,#1e2430)"></div>
<div style="position:absolute;left:53.4px;top:0;width:5.6px;height:29px;background:linear-gradient(#5a7a3e,#6a6a60,#b8b8b0)"></div>
<div style="position:absolute;left:59.8px;top:0;width:6.1px;height:29px;background:linear-gradient(#c8dcec,#a8c070,#98b058)"></div>
<div style="position:absolute;left:67.0px;top:0;width:5.3px;height:29px;background:linear-gradient(#c8dcef,#6a9060,#3a5a2a)"></div>
<div style="position:absolute;left:72.8px;top:0;width:4.8px;height:29px;background:linear-gradient(#1a1a1a,#9ab0d0,#c0d0e8)"></div>
<div style="position:absolute;left:78.7px;top:0;width:6.7px;height:29px;background:linear-gradient(#b8d4ec,#5a4a2a,#6a2a20)"></div>
<div style="position:absolute;left:86.0px;top:0;width:4.4px;height:29px;background:linear-gradient(#c8dcf0,#a8b870,#b0b878)"></div>
<div style="position:absolute;left:91.0px;top:0;width:6.3px;height:29px;background:linear-gradient(#c0d8ee,#3a5a2e,#c0c4c0)"></div>
<div style="position:absolute;left:97.9px;top:0;width:1.8px;height:29px;background:#222222"></div>
<div style="position:absolute;left:100.5px;top:0;width:4.3px;height:29px;background:linear-gradient(#c8dcf0,#707070,#c0c0c0)"></div>
<div style="position:absolute;left:105.7px;top:0;width:6.0px;height:29px;background:linear-gradient(#b8d4ec,#3a5a2a,#a0a8a0)"></div>
<div style="position:absolute;left:111.7px;top:0;width:6.3px;height:29px;background:linear-gradient(#b8d4ec,#5a8040,#7a9a58)"></div>
<div style="position:absolute;left:118.7px;top:0;width:1.0px;height:29px;background:#9a9a9a"></div>
<div style="position:absolute;left:120.8px;top:0;width:7.5px;height:29px;background:linear-gradient(#222c3a,#1e2838,#2a3a58)"></div>
<div style="position:absolute;left:129.3px;top:0;width:7.5px;height:29px;background:#0c0c0c"></div>
<div style="position:absolute;left:137.9px;top:0;width:4.1px;height:29px;background:linear-gradient(#5a5a30,#2a2a1a,#1a1a12)"></div>
<div style="position:absolute;left:143.0px;top:0;width:0.7px;height:29px;background:#111111"></div>
<div style="position:absolute;left:145.3px;top:0;width:28.3px;height:29px;background:linear-gradient(#2c2218,#261c12,#1e160e)"></div>
<div style="position:absolute;left:174.7px;top:0;width:2.1px;height:29px;background:linear-gradient(#8a7a40,#2a2418,#1a1a1a)"></div>
<div style="position:absolute;left:178.4px;top:0;width:8.0px;height:29px;background:linear-gradient(#e4eaf0,#d8e0ea,#6a88b0)"></div>
<div style="position:absolute;left:187.8px;top:0;width:8.5px;height:29px;background:linear-gradient(#e0e8f0,#5a78a8,#6a88b8)"></div>
<div style="position:absolute;left:197.8px;top:0;width:4.1px;height:29px;background:linear-gradient(#1c2a40,#223050,#1a2438)"></div>
<div style="position:absolute;left:203.0px;top:0;width:7.4px;height:29px;background:linear-gradient(#1e2a48,#8a2a3a,#d02828)"></div>
<div style="position:absolute;left:211.3px;top:0;width:15.1px;height:29px;background:linear-gradient(#8ab4e0,#1a2a40,#3a6aa0)"></div>
<div style="position:absolute;left:227.3px;top:0;width:8.7px;height:29px;background:linear-gradient(#c8dcec,#2a4a70,#3a6aa8)"></div>
<div style="position:absolute;left:236.0px;top:0;width:1.6px;height:29px;background:#3a70b0"></div>
<div style="position:absolute;left:238.3px;top:0;width:2.5px;height:29px;background:linear-gradient(#e8e8e8,#3a3030,#d0c8c8)"></div>
<div style="position:absolute;left:241.9px;top:0;width:3.1px;height:29px;background:linear-gradient(#e0e8e8,#3a8a9a,#e0e0e0)"></div>
<div style="position:absolute;left:246.0px;top:0;width:1.2px;height:29px;background:#c8b8a0"></div>
<div style="position:absolute;left:248.3px;top:0;width:3.7px;height:29px;background:linear-gradient(#3a8ab0,#2a7aa0,#3a8ab8)"></div>
<div style="position:absolute;left:253.0px;top:0;width:4.9px;height:29px;background:linear-gradient(#a0a8a8,#4a90a8,#3a88a8)"></div>
<div style="position:absolute;left:259.0px;top:0;width:3.0px;height:29px;background:linear-gradient(#8a9a88,#a09880,#5a8aa0)"></div>
<div style="position:absolute;left:263.2px;top:0;width:4.3px;height:29px;background:linear-gradient(#3a5a40,#6a9ac0,#5a90c8)"></div>
<div style="position:absolute;left:268.5px;top:0;width:2.2px;height:29px;background:#2a2a2a"></div>
<div style="position:absolute;left:271.2px;top:0;width:3.2px;height:29px;background:linear-gradient(#3a5030,#a09a80,#3a4a30)"></div>
<div style="position:absolute;left:275.5px;top:0;width:4.2px;height:29px;background:linear-gradient(#a8c8e8,#90b8e0,#7aa0d0)"></div>
<div style="position:absolute;left:280.8px;top:0;width:2.7px;height:29px;background:linear-gradient(#d8e4ec,#a0c0d8)"></div>
<div style="position:absolute;left:284.0px;top:0;width:4.3px;height:29px;background:linear-gradient(#5a4030,#2a2a30,#3a3a40)"></div>
<div style="position:absolute;left:289.3px;top:0;width:5.9px;height:29px;background:linear-gradient(#5a6050,#8a8a70,#4a5a50)"></div>
<div style="position:absolute;left:296.0px;top:0;width:5.0px;height:29px;background:linear-gradient(#6a4a3a,#e8e0e0,#4a3a5a)"></div>
<div style="position:absolute;left:302.0px;top:0;width:14.0px;height:29px;background:linear-gradient(#dce0e4,#c89070,#b07858)"></div>
<div style="position:absolute;left:316.0px;top:0;width:1.0px;height:29px;background:#8a5a4a"></div>
<div style="position:absolute;left:318.3px;top:0;width:8.4px;height:29px;background:linear-gradient(#d8dce4,#c0c8d4,#8a98b0)"></div>
<div style="position:absolute;left:328.0px;top:0;width:6.0px;height:29px;background:#0a0a0a"></div>
<div style="position:absolute;left:335.2px;top:0;width:9.8px;height:29px;background:linear-gradient(#98c0e4,#8a7a60,#8a9a50)"></div>
<div style="position:absolute;left:346.0px;top:0;width:4.0px;height:29px;background:linear-gradient(#d8d4cc,#6a6058,#5a6a7a)"></div>
<div style="position:absolute;left:351.2px;top:0;width:3.8px;height:29px;background:linear-gradient(#6a90c8,#1a1a1a,#3a3a3a)"></div>
<div style="position:absolute;left:356.0px;top:0;width:8.0px;height:29px;background:linear-gradient(#b8c4c8,#a8a490,#989080)"></div>
<div style="position:absolute;left:365.0px;top:0;width:5.0px;height:29px;background:linear-gradient(#4a4a50,#8a8a8a,#d8d8d8)"></div>
<div style="position:absolute;left:371.0px;top:0;width:5.3px;height:29px;background:linear-gradient(#e8e4e0,#4a3020,#5a4a40)"></div>
<div style="position:absolute;left:377.3px;top:0;width:5.4px;height:29px;background:linear-gradient(#a0a0a0,#8aa0c0,#6a5a50)"></div>
<div style="position:absolute;left:384.0px;top:0;width:5.4px;height:29px;background:linear-gradient(#d8d8d8,#a0a0a0,#3a3028)"></div>
<div style="position:absolute;left:390.7px;top:0;width:5.3px;height:29px;background:linear-gradient(#2a4a58,#3a5a68,#2a4a58)"></div>
<div style="position:absolute;left:396.0px;top:0;width:2.0px;height:29px;background:#2a4a58"></div>
<div style="position:absolute;left:399.7px;top:0;width:13.9px;height:29px;background:linear-gradient(#c0a888,#a89070,#58a898)"></div>
<div style="position:absolute;left:415.0px;top:0;width:11.4px;height:29px;background:linear-gradient(#a89888,#7a7060,#5a5048)"></div>
<div style="position:absolute;left:428.0px;top:0;width:9.6px;height:29px;background:linear-gradient(#dcdcdc,#c8b090,#3a2a20)"></div>
<div style="position:absolute;left:438.7px;top:0;width:3.3px;height:29px;background:linear-gradient(#f0f0f0,#3a2a20,#c8b8a0)"></div>
<div style="position:absolute;left:443.0px;top:0;width:15.0px;height:29px;background:linear-gradient(#a08870,#8a7a68,#7a6a5a)"></div>
<div style="position:absolute;left:458.0px;top:0;width:18.0px;height:29px;background:linear-gradient(#c8b8a8,#e8e4e0,#b8a898)"></div>
<div style="position:absolute;left:476.0px;top:0;width:2.0px;height:29px;background:#c0a080"></div>
<div style="position:absolute;left:479.7px;top:0;width:8.0px;height:29px;background:linear-gradient(#c8a070,#b08850,#3a2a20)"></div>
<div style="position:absolute;left:488.8px;top:0;width:4.2px;height:29px;background:linear-gradient(#e8e8e8,#8a6040,#9a7050)"></div>
<div style="position:absolute;left:494.3px;top:0;width:7.3px;height:29px;background:linear-gradient(#2a302c,#303632,#2a2e2a)"></div>
<div style="position:absolute;left:503.2px;top:0;width:9.6px;height:29px;background:linear-gradient(#2a302c,#363c36,#2a2e2a)"></div>
<div style="position:absolute;left:515.0px;top:0;width:8.8px;height:29px;background:#161616"></div>
<div style="position:absolute;left:524.5px;top:0;width:1.5px;height:29px;background:#b09070"></div>
<div style="position:absolute;left:527.2px;top:0;width:4.3px;height:29px;background:linear-gradient(#5a3018,#4a2810,#3a2010)"></div>
<div style="position:absolute;left:532.9px;top:0;width:5.0px;height:29px;background:linear-gradient(#2a2a2a,#d8d8d8,#a89880)"></div>
<div style="position:absolute;left:539.5px;top:0;width:3.2px;height:29px;background:#111111"></div>
<div style="position:absolute;left:543.7px;top:0;width:6.3px;height:29px;background:linear-gradient(#c0c4c8,#9a9aa0,#b03030)"></div>
<div style="position:absolute;left:551.2px;top:0;width:12.4px;height:29px;background:linear-gradient(#8a8a80,#2a3060,#c0b090)"></div>
<div style="position:absolute;left:565.0px;top:0;width:6.6px;height:29px;background:#0e0e0e"></div>
<div style="position:absolute;left:572.7px;top:0;width:4.8px;height:29px;background:linear-gradient(#4a90d0,#e0c8a0,#d0b890)"></div>
<div style="position:absolute;left:578.5px;top:0;width:5.4px;height:29px;background:linear-gradient(#c0b0a0,#8a8a90,#7a7a80)"></div>
<div style="position:absolute;left:585.0px;top:0;width:2.0px;height:29px;background:#111111"></div>
<div style="position:absolute;left:588.0px;top:0;width:6.5px;height:29px;background:linear-gradient(#2a2a1e,#1a1a14,#141410)"></div>
<div style="position:absolute;left:595.6px;top:0;width:13.4px;height:29px;background:linear-gradient(#3a2418,#4a2a1e,#2a180e)"></div>
</div>

<!-- playhead -->
<div class="a" style="left:123px;top:453px;width:1px;height:6px;background:#ddd"></div>
<div class="a" style="left:123px;top:461px;width:1px;height:118px;background:#5f5f5f"></div>
<div class="a" style="left:120.6px;top:458.9px;width:5.6px;height:5.6px;background:#555;border-radius:50%"></div>

<!-- tooltip -->
<div class="a" style="left:481px;top:357px;width:251px;height:140px;background:#065fd4;border-radius:4px"></div>
<svg class="a" style="left:493px;top:496px" width="18" height="12" viewBox="0 0 18 12"><path d="M1.2 0H17.8L8.6 11Z" fill="#065fd4"/></svg>
<div class="a" style="left:500px;top:376px;font-size:11px;font-weight:700;line-height:13px;color:#fff;transform:scaleX(0.86);transform-origin:0 0">Adjust position and length</div>
<div class="a" style="left:500px;top:406px;font-size:10.8px;line-height:15.7px;color:#fff;-webkit-text-stroke:0.15px #fff;transform:scaleX(0.945);transform-origin:0 0">Click and drag to adjust the position of the<br>replacement song. Claim must be completely<br>covered to remove it from the video.</div>
<div class="a" style="left:683px;top:467px;font-size:11.6px;font-weight:700;line-height:14px;color:#fff;transform:scaleX(0.84);transform-origin:0 0">CLOSE</div>

<!-- green highlight box on clip -->
<div class="a" style="left:472px;top:501px;width:63px;height:41px;border:2px solid rgba(61,227,160,0.85)"></div>
</body></html>
